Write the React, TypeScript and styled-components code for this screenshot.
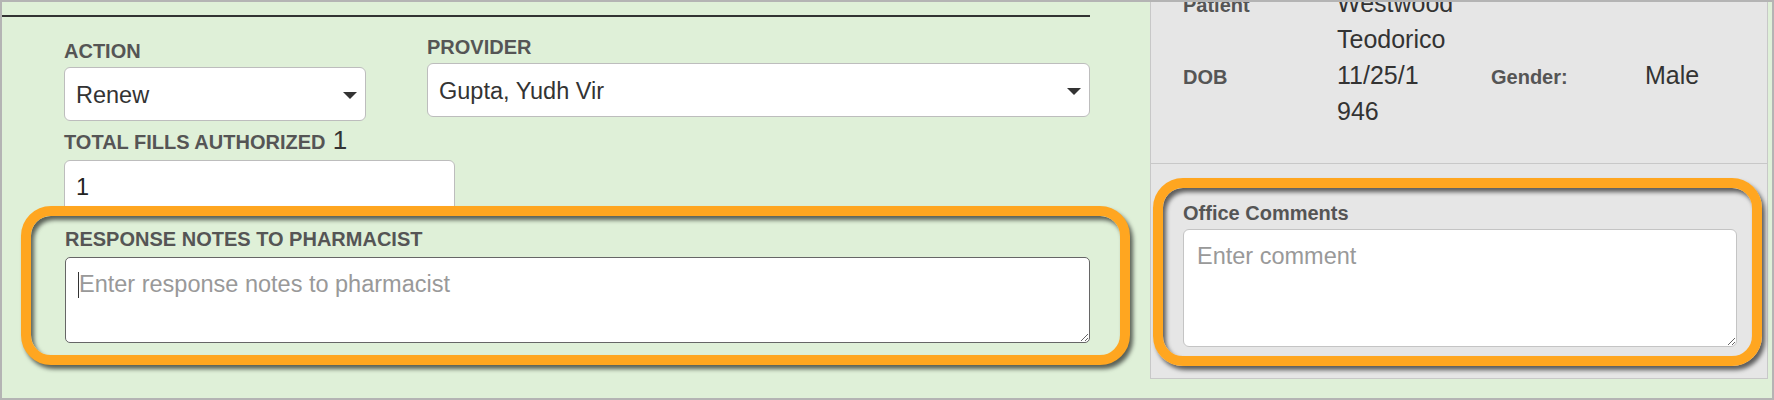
import * as React from 'react';
import styled, { createGlobalStyle } from 'styled-components';

const GlobalStyle = createGlobalStyle`
  html, body {
    margin: 0;
    padding: 0;
    background: #fff;
  }
  body {
    font-family: "Liberation Sans", Arial, Helvetica, sans-serif;
  }
  * {
    box-sizing: border-box;
  }
`;

const ORANGE = '#ffa620';
const GREEN = '#dff0d8';

class App extends React.Component {
  render() {
    return (
      <>
        <GlobalStyle />
        <Frame>
          <LeftColumn>
            <Rule />
            <FieldRow>
              <Field $width={302}>
                <Label>ACTION</Label>
                <SelectBox>
                  <span>Renew</span>
                  <Caret />
                </SelectBox>
              </Field>
              <Field $width={663} $shift={-4}>
                <Label>PROVIDER</Label>
                <SelectBox>
                  <span>Gupta, Yudh Vir</span>
                  <Caret />
                </SelectBox>
              </Field>
            </FieldRow>
            <FillsField>
              <Label $gap={7}>
                TOTAL FILLS AUTHORIZED<Count> 1</Count>
              </Label>
              <TextInput defaultValue="1" />
            </FillsField>
            <LeftCallout>
              <Label $gap={7}>RESPONSE NOTES TO PHARMACIST</Label>
              <NotesWrap>
                <NotesArea $dark $height={86} placeholder="Enter response notes to pharmacist" />
                <TextCursor />
              </NotesWrap>
            </LeftCallout>
          </LeftColumn>

          <SidePanel>
            <InfoGrid>
              <InfoLabel>Patient</InfoLabel>
              <InfoValue>Westwood Teodorico</InfoValue>
              <InfoLabel $newRow>DOB</InfoLabel>
              <InfoValue $breakAll>11/25/1946</InfoValue>
              <InfoLabel>Gender:</InfoLabel>
              <InfoValue>Male</InfoValue>
            </InfoGrid>
            <CommentsSection>
              <RightCallout>
                <Label $gap={5} $case="none">Office Comments</Label>
                <NotesArea $height={118} placeholder="Enter comment" />
              </RightCallout>
            </CommentsSection>
          </SidePanel>
        </Frame>
      </>
    );
  }
}

const Caret = () => (
  <svg width="14" height="7" viewBox="0 0 14 7">
    <path d="M0 0 L14 0 L7 7 Z" fill="#333" />
  </svg>
);

const Frame = styled.div`
  width: 1774px;
  height: 400px;
  border: 2px solid #b4b4b4;
  background: ${GREEN};
  display: flex;
  overflow: hidden;
`;

const LeftColumn = styled.div`
  width: 1148px;
  flex: none;
  display: flex;
  flex-direction: column;
`;

const Rule = styled.div`
  width: 1088px;
  height: 2px;
  margin-top: 13px;
  background: #333;
`;

const FieldRow = styled.div`
  display: flex;
  align-items: flex-start;
  gap: 61px;
  margin-top: 23px;
  padding-left: 62px;
`;

const Field = styled.div<{ $width: number; $shift?: number }>`
  display: flex;
  flex-direction: column;
  width: ${(p) => p.$width}px;
  margin-top: ${(p) => p.$shift ?? 0}px;
`;

const FillsField = styled.div`
  display: flex;
  flex-direction: column;
  width: 391px;
  margin: 10px 0 0 62px;
`;

const Label = styled.label<{ $gap?: number; $case?: string }>`
  display: block;
  font-size: 20px;
  font-weight: 700;
  line-height: 22px;
  color: #555;
  white-space: nowrap;
  margin-bottom: ${(p) => p.$gap ?? 5}px;
`;

const Count = styled.span`
  font-size: 26px;
  font-weight: 400;
  line-height: 0;
  color: #333;
`;

const SelectBox = styled.div`
  height: 54px;
  display: flex;
  align-items: center;
  justify-content: space-between;
  padding: 3px 8px 0 11px;
  background: #fff;
  border: 1px solid #bdbdbd;
  border-radius: 6px;
  font-size: 23.5px;
  color: #333;
`;

const TextInput = styled.input`
  width: 100%;
  height: 54px;
  padding: 0 11px;
  background: #fff;
  border: 1px solid #bdbdbd;
  border-radius: 6px;
  font-family: inherit;
  font-size: 23.5px;
  color: #222;
  outline: none;
`;

const Callout = styled.div`
  position: relative;
  border: 10px solid ${ORANGE};
  border-radius: 30px;
  box-shadow: 3px 4px 4px rgba(0, 0, 0, 0.6), inset 3px 4px 4px rgba(0, 0, 0, 0.6);
`;

const LeftCallout = styled(Callout)`
  width: 1109px;
  margin: -8px 0 0 19px;
  padding: 12px 30px 12px 34px;
  background: ${GREEN};
`;

const RightCallout = styled(Callout)`
  margin: 14px 5px 12px 2px;
  padding: 14px 15px 9px 20px;
`;

const NotesWrap = styled.div`
  position: relative;
`;

const NotesArea = styled.textarea<{ $dark?: boolean; $height: number }>`
  display: block;
  width: 100%;
  height: ${(p) => p.$height}px;
  padding: 11px 13px;
  background: #fff;
  border: 1px solid ${(p) => (p.$dark ? '#666' : '#c4c4c4')};
  border-radius: ${(p) => (p.$dark ? 5 : 6)}px;
  font-family: inherit;
  font-size: 23.5px;
  line-height: 1.3;
  color: #333;
  outline: none;
  resize: vertical;

  &::placeholder {
    color: #999;
  }
`;

const TextCursor = styled.span`
  position: absolute;
  left: 13px;
  top: 15px;
  width: 1px;
  height: 26px;
  background: #333;
`;

const SidePanel = styled.aside`
  width: 618px;
  flex: none;
  align-self: flex-start;
  margin-top: -38px;
  background: #e6e6e6;
  border: 1px solid #c8c8c8;
`;

const InfoGrid = styled.div`
  display: grid;
  grid-template-columns: repeat(4, 154px);
  align-items: baseline;
  padding: 20px 0 34px;
  border-bottom: 1px solid #c8c8c8;
`;

const InfoLabel = styled.div<{ $newRow?: boolean }>`
  grid-column-start: ${(p) => (p.$newRow ? 1 : 'auto')};
  padding: 0 32px;
  font-size: 20px;
  font-weight: 700;
  line-height: 36px;
  color: #555;
`;

const InfoValue = styled.div<{ $breakAll?: boolean }>`
  padding: 0 32px;
  font-size: 25px;
  line-height: 36px;
  color: #333;
  word-break: ${(p) => (p.$breakAll ? 'break-all' : 'normal')};
`;

const CommentsSection = styled.div`
  display: flex;
  flex-direction: column;
`;

export default App;
